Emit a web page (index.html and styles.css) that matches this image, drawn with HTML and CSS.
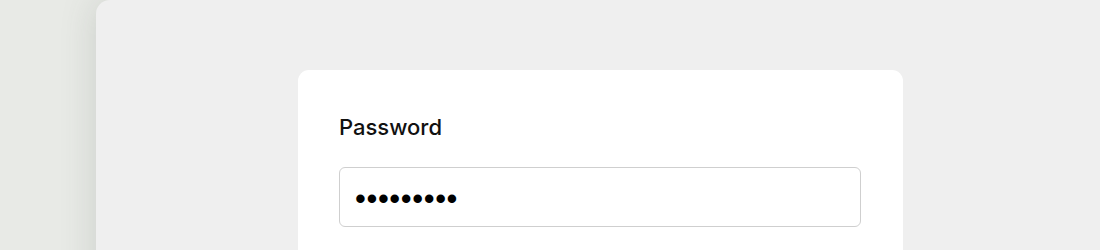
FILE: index.html
```html
<!DOCTYPE html>
<html lang="en">
<head>
<meta charset="utf-8">
<title>Password</title>
<link rel="stylesheet" href="styles.css">
</head>
<body>
  <main class="panel">
    <form class="card">
      <label class="field-label" for="pw">Password</label>
      <input class="field-input" id="pw" type="password" value="password1">
    </form>
  </main>
</body>
</html>
```
FILE: styles.css
```css
html, body {
  margin: 0;
  padding: 0;
}
body {
  background: #e8eae6;
  font-family: "Liberation Sans", Arial, sans-serif;
  overflow: hidden;
  height: 250px;
}
.panel {
  margin-left: 96px;
  min-height: 400px;
  background: #efefef;
  border-top-left-radius: 14px;
  box-shadow: 0 0 36px rgba(70, 85, 70, 0.18);
  padding: 70px 0 0 202px;
  box-sizing: border-box;
}
.card {
  width: 605px;
  min-height: 300px;
  box-sizing: border-box;
  background: #ffffff;
  border-radius: 11px;
  padding: 44px 41px 0 41px;
  display: flex;
  flex-direction: column;
}
.field-label {
  font-family: Inter, "Liberation Sans", Arial, sans-serif;
  font-size: 22px;
  font-weight: 500;
  line-height: 26px;
  color: #111111;
  margin-bottom: 27px;
}
.field-input {
  width: 522px;
  height: 60px;
  box-sizing: border-box;
  border: 1px solid #cfcfcf;
  border-radius: 6px;
  padding: 4px 0 0 15px;
  margin: 0;
  font-family: "Liberation Sans", Arial, sans-serif;
  font-size: 31px;
  letter-spacing: 0.6px;
  color: #000000;
  background: #ffffff;
  outline: none;
}
```
